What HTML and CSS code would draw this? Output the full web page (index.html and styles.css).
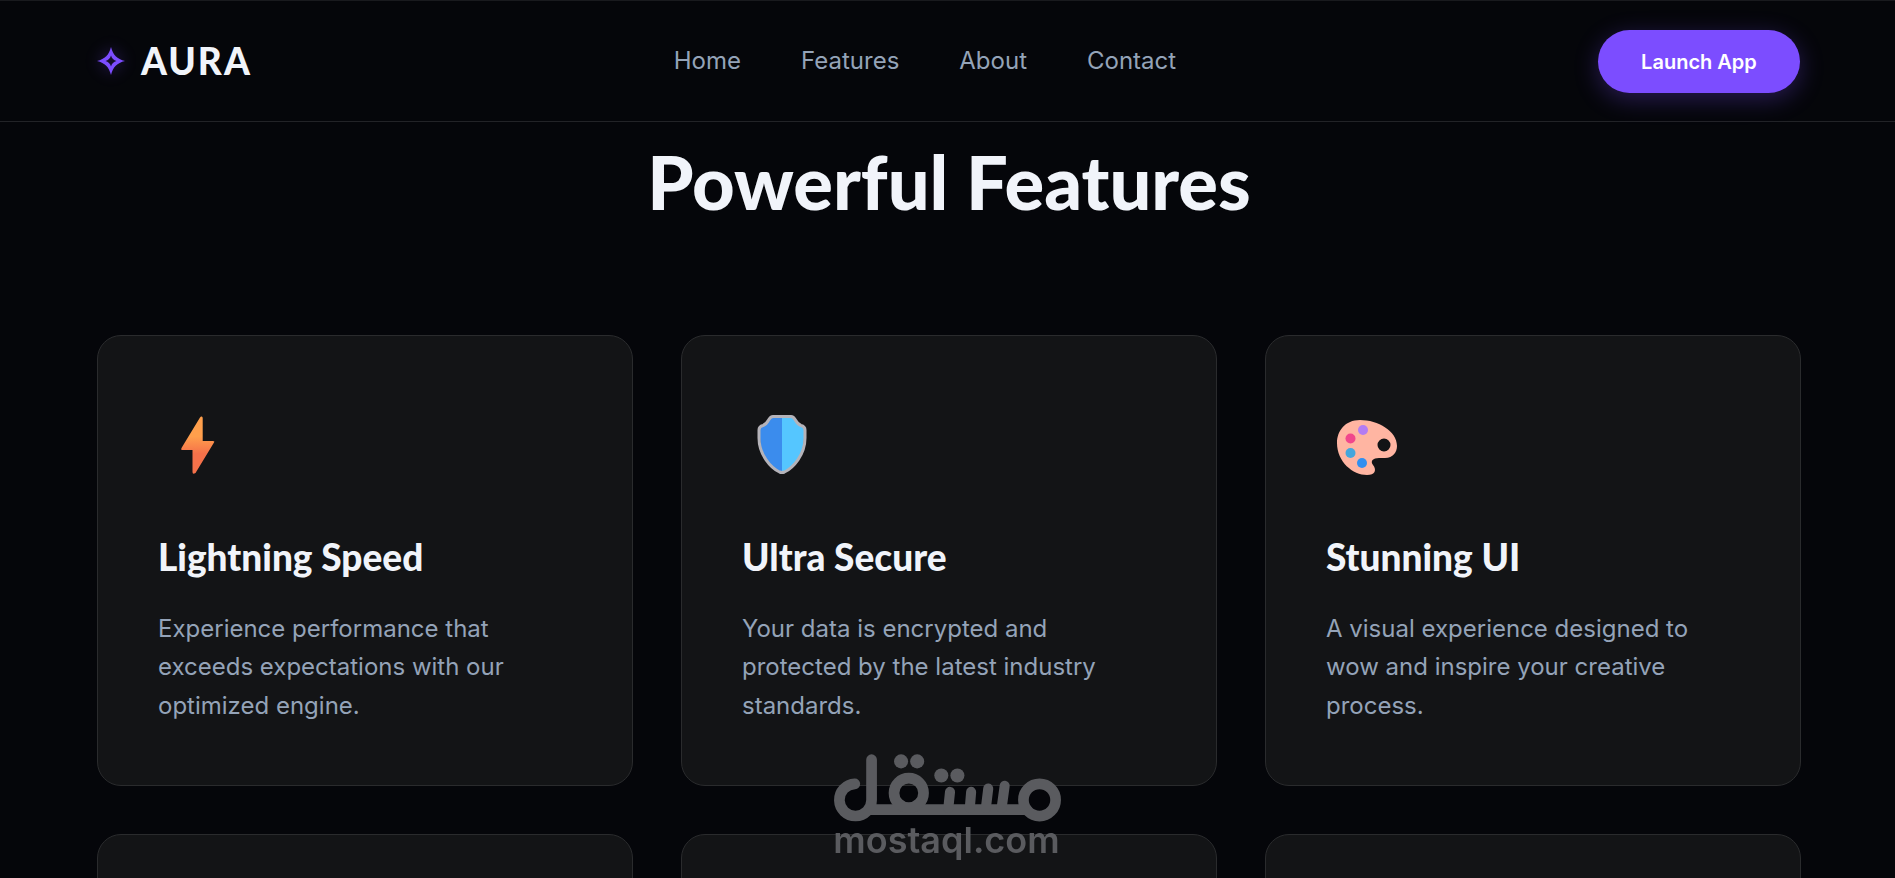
FILE: index.html
```html
<!DOCTYPE html>
<html lang="en">
<head>
<meta charset="utf-8">
<meta name="viewport" content="width=device-width, initial-scale=1">
<title>AURA</title>
<link rel="stylesheet" href="styles.css">
</head>
<body>
<header class="topbar">
  <a class="brand" href="#home">
    <svg class="brand-mark" viewBox="0 0 28 28" aria-hidden="true"><path fill-rule="evenodd" d="M14 0C16 8 20 12 28 14C20 16 16 20 14 28C12 20 8 16 0 14C8 12 12 8 14 0ZM14 8.500C13.300 11.200 11.200 13.300 8.500 14C11.200 14.700 13.300 16.800 14 19.500C14.700 16.800 16.800 14.700 19.500 14C16.800 13.300 14.700 11.200 14 8.500Z"/></svg>
    <span>AURA</span>
  </a>
  <nav class="nav">
    <a href="#home">Home</a>
    <a href="#features">Features</a>
    <a href="#about">About</a>
    <a href="#contact">Contact</a>
  </nav>
  <button class="launch" type="button">Launch App</button>
</header>
<main class="features" id="features">
  <h1 class="title">Powerful Features</h1>
  <div class="grid">
    <article class="card">
      <svg class="icon" viewBox="0 0 80 90" aria-hidden="true">
        <defs><linearGradient id="bolt" x1="0" y1="0" x2="0" y2="1"><stop offset=".35" stop-color="#ff9f4c"/><stop offset=".65" stop-color="#f5714a"/></linearGradient></defs>
        <path fill="url(#bolt)" d="M43 16.500Q44.700 16 44.700 18V41H55Q57 41 56 42.500L37.500 73Q34.500 75 34.500 72V50H24Q22.500 50 23.500 48L42 17.500Z"/>
      </svg>
      <h2>Lightning Speed</h2>
      <p>Experience performance that exceeds expectations with our optimized engine.</p>
    </article>
    <article class="card">
      <svg class="icon" viewBox="1 0 80 90" aria-hidden="true">
        <path fill="#3b8ced" d="M41 16.500H32C28 16.500 27 23 19 27.500V38C19 55 29 68 41 72.500Z"/>
        <path fill="#55c6ff" d="M41 16.500H50C54 16.500 55 23 63 27.500V38C63 55 53 68 41 72.500Z"/>
        <path fill="none" stroke="#b5b3b9" stroke-width="3" stroke-linejoin="round" d="M32 16.500H50C55 16.500 53.500 23 60 25.500Q64 26.500 64 30V38C64 55 52 68 43.500 72Q41 73 38.500 72C30 68 18 55 18 38V30Q18 26.500 22 25.500C28.500 23 27 16.500 32 16.500Z"/>
      </svg>
      <h2>Ultra Secure</h2>
      <p>Your data is encrypted and protected by the latest industry standards.</p>
    </article>
    <article class="card">
      <svg class="icon" viewBox="2 0 80 90" aria-hidden="true">
        <path fill="#ffb5a2" fill-rule="evenodd" d="M36 20C21 20 13 31 13 43C13 62 29 75 43 75C51 75 53 70 49 65C46 61 49 58 55 58H61C69 58 73 52 73 46C73 31 54 20 36 20ZM60 38.500A6.500 6.500 0 1 1 60 51.500A6.500 6.500 0 1 1 60 38.500Z"/>
        <circle cx="39" cy="30" r="5" fill="#b37cf3"/>
        <circle cx="26.500" cy="38.500" r="5" fill="#f1478c"/>
        <circle cx="26.500" cy="53" r="5" fill="#45a6dc"/>
        <circle cx="38" cy="63" r="5" fill="#318ff0"/>
      </svg>
      <h2>Stunning UI</h2>
      <p>A visual experience designed to wow and inspire your creative process.</p>
    </article>
    <article class="card"></article>
    <article class="card"></article>
    <article class="card"></article>
  </div>
</main>
<div class="watermark">
  <svg viewBox="72 44 680 204" role="img" aria-label="مستقل" fill="none" stroke="currentColor" stroke-width="32" stroke-linecap="round">
    <path d="M137 133A48 48 0 1 0 187 181V61M180 210H650"/>
    <circle cx="298" cy="160" r="44"/>
    <circle cx="688" cy="181" r="48"/>
    <path stroke-width="30" d="M416 205L421 157M480 205L484 157M528 205L535 147M575 205L584 139"/>
    <g fill="currentColor" stroke="none"><circle cx="275" cy="66" r="21"/><circle cx="323" cy="66" r="21"/><circle cx="395" cy="108" r="21"/><circle cx="443" cy="108" r="21"/></g>
  </svg>
  <span>mostaql.com</span>
</div>
</body>
</html>
```
FILE: styles.css
```css
* { box-sizing: border-box; }
html, body { height: 100%; }
body {
  margin: 0;
  overflow: hidden;
  background: #05060a;
  color: #f1f4fa;
  font-family: Inter, sans-serif;
  font-size: 24px;
}
.topbar {
  display: flex;
  justify-content: space-between;
  align-items: center;
  height: 122px;
  padding: 0 95px 0 97px;
  border-top: 1px solid #191a1e;
  border-bottom: 1px solid #222327;
}
.brand {
  display: flex;
  align-items: center;
  gap: 16px;
  color: #f1f4fa;
  font: 900 37px/44px Lato, sans-serif;
  letter-spacing: 2px;
  text-decoration: none;
}
.brand-mark {
  width: 28px;
  height: 28px;
  fill: #7c4dff;
  filter: drop-shadow(0 0 8px #7c4dff66);
}
.nav { display: flex; gap: 60px; padding-bottom: 2px; }
.nav a { color: #94a3b8; text-decoration: none; }
.launch {
  width: 202px;
  height: 63px;
  padding: 2px 0 0;
  border: 0;
  border-radius: 32px;
  background: #7c4dff;
  box-shadow: 0 6px 24px #7c4dff4d;
  color: #fff;
  font: 600 20px/24px Inter, sans-serif;
}
.features { padding: 16px 94px 0 97px; }
.title {
  margin: 0 0 110px;
  font: 900 74px/87px Lato, sans-serif;
  text-align: center;
}
.grid {
  display: grid;
  grid-template-columns: repeat(3, 1fr);
  gap: 48px;
}
.card {
  min-height: 451px;
  padding: 60px;
  border: 1px solid #2a2b2d;
  border-radius: 24px;
  background: #131416;
}
.icon { display: block; width: 80px; height: 90px; margin-top: 4px; }
.card h2 {
  margin: 45px 0 31px;
  font: 900 37px/44px Lato, sans-serif;
}
.card p { margin: 0; color: #94a3b8; line-height: 1.6; }
.watermark {
  position: fixed;
  bottom: 20px;
  left: 50%;
  width: 228px;
  margin-left: -115px;
  color: #5a5b5f;
}
.watermark svg { display: block; width: 100%; }
.watermark span {
  display: block;
  font: 600 36px/36px Inter, sans-serif;
  text-align: center;
}
```
